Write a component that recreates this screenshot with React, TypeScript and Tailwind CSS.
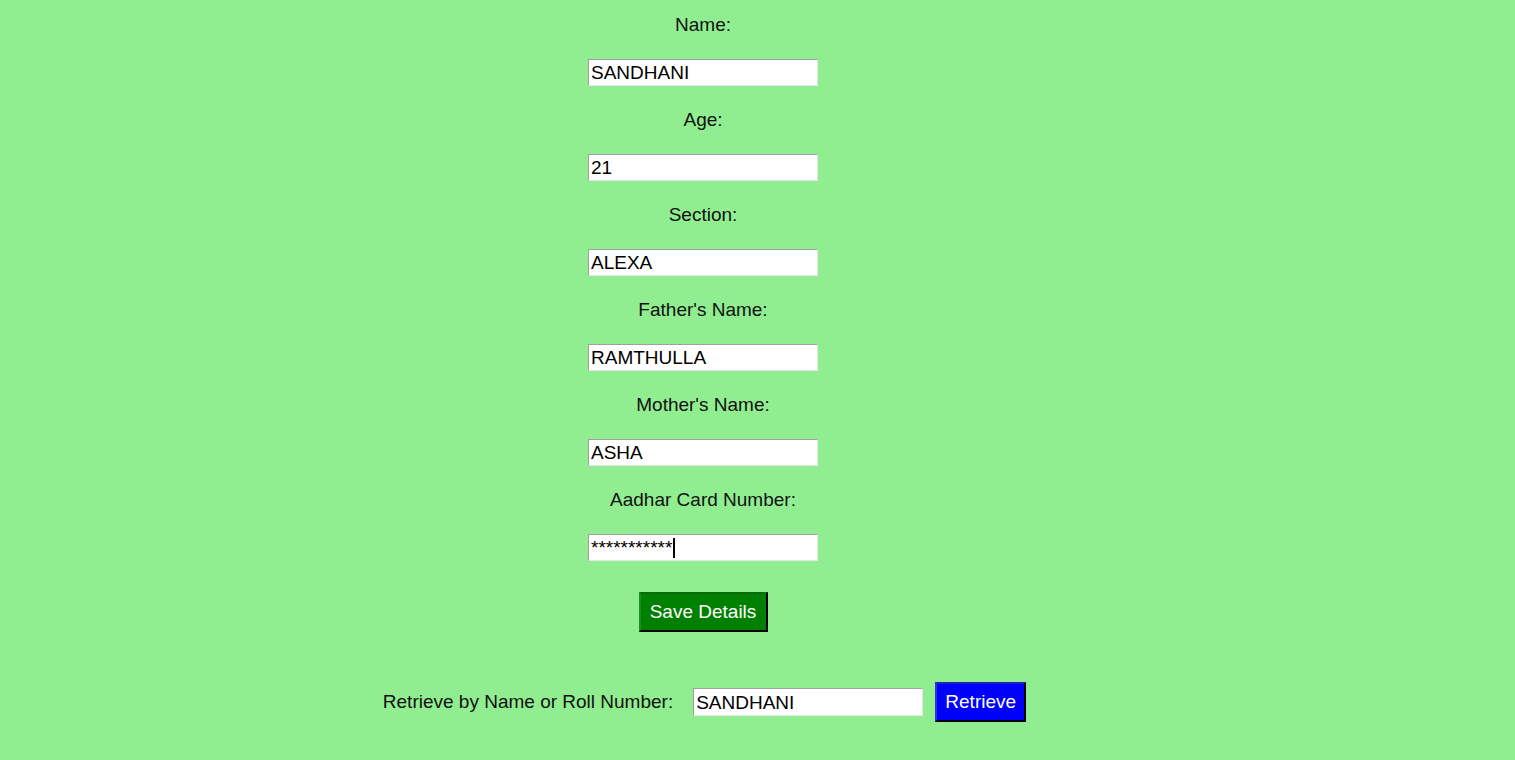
import React from "react"

const fields = [
  { label: "Name:", value: "SANDHANI" },
  { label: "Age:", value: "21" },
  { label: "Section:", value: "ALEXA" },
  { label: "Father's Name:", value: "RAMTHULLA" },
  { label: "Mother's Name:", value: "ASHA" },
]

const font = "font-['Liberation_Sans',Arial,sans-serif]"

function Entry({ children }: { children: React.ReactNode }) {
  return (
    <div className="flex h-[27px] w-[230px] items-center border border-t-[#a0a0a0] border-l-[#a0a0a0] border-r-[#e6e6e6] border-b-[#e6e6e6] bg-white pl-[2px] text-[19px] leading-none text-black">
      {children}
    </div>
  )
}

export default function App() {
  return (
    <div className={`min-h-[760px] w-full bg-[#90ee90] pr-[109px] ${font}`}>
      <div className="flex flex-col items-center gap-[23px] pt-[14px]">
        {fields.map((f) => (
          <React.Fragment key={f.label}>
            <div className="h-[22px] text-[19px] leading-[22px] text-[#111]">{f.label}</div>
            <Entry>{f.value}</Entry>
          </React.Fragment>
        ))}
        <div className="h-[22px] text-[19px] leading-[22px] text-[#111]">Aadhar Card Number:</div>
        <Entry>
          <span className="text-[19px] leading-none">***********</span>
          <span className="ml-[1px] h-[20px] w-[2px] bg-black"></span>
        </Entry>
      </div>

      {/* Save button */}
      <div className="mt-[31px] flex justify-center">
        <button className="h-[40px] w-[129px] border-2 border-t-[#0b6b0b] border-l-[#1a8f1a] border-r-black border-b-black bg-[#008000] text-[19px] text-white">
          Save Details
        </button>
      </div>

      {/* Retrieve row */}
      <div className="mt-[50px] flex items-center justify-center pl-[3px]">
        <span className="text-[19px] text-[#111]">Retrieve by Name or Roll Number:</span>
        <div className="ml-[20px]">
          <div className="flex h-[28px] w-[230px] items-center border border-t-[#a0a0a0] border-l-[#a0a0a0] border-r-[#e6e6e6] border-b-[#e6e6e6] bg-white pl-[2px] text-[19px] leading-none text-black">
            SANDHANI
          </div>
        </div>
        <button className="ml-[12px] h-[40px] w-[91px] border-2 border-t-[#2020c0] border-l-[#3030e0] border-r-black border-b-black bg-[#0000ff] text-[19px] text-white">
          Retrieve
        </button>
      </div>
    </div>
  )
}
